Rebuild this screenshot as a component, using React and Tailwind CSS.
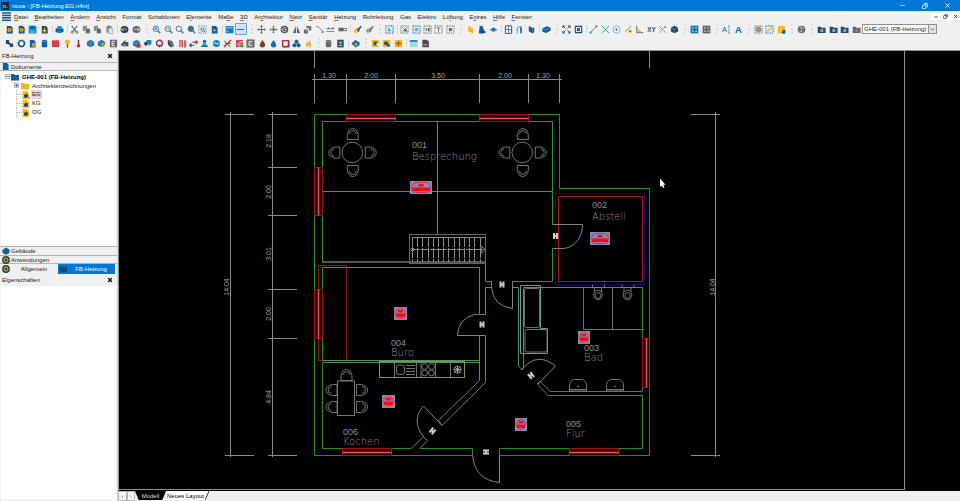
import React from 'react'
import { Minus, X, Copy } from 'lucide-react'

const BLUE = '#0b5fa5'
const NAVY = '#1a4a78'
const SKY = '#2e9bd6'
const GOLD = '#f8b81c'
const GREY = '#666666'
const RED = '#d3203a'

// ---------------------------------------------------------------------
// Small pieces that several toolbar icons share (10 x 10 grid)
// ---------------------------------------------------------------------
const Page = ({ c = NAVY }) => <path d="M2 1h4.5L8.5 3v6.5H2z" fill={c} />
const Cog = ({ x = 5, y = 5, r = 2, c = GOLD, hole = NAVY }) => (
  <>
    <circle cx={x} cy={y} r={r} fill={c} stroke={c} strokeWidth="1" strokeDasharray="1 .7" />
    <circle cx={x} cy={y} r={r * 0.42} fill={hole} />
  </>
)
const Lens = ({ children, fill = 'none' }) => (
  <g fill={fill} stroke="#3b6a94" strokeWidth="1">
    <circle cx="4.2" cy="4.2" r="3" />
    <path d="M6.5 6.5L9.2 9.2" strokeWidth="1.5" />
    {children}
  </g>
)
const Dashed = ({ c = GREY, children }) => (
  <>
    <rect x="1" y="1" width="8" height="8" fill="none" stroke={c} strokeWidth="1" strokeDasharray="1.6 1" />
    {children}
  </>
)
const Cube = ({ c = BLUE }) => (
  <>
    <path d="M5 .8L9 3v4.2L5 9.3 1 7.2V3z" fill={c} />
    <path d="M1 3l4 2 4-2M5 5v4.3" fill="none" stroke="#fff" strokeWidth=".5" opacity=".45" />
  </>
)
const Folder = ({ c = NAVY, dot = GOLD }) => (
  <>
    <path d="M.8 2h3.2l1 1h4.5v6H.8z" fill={c} />
    <circle cx="5.3" cy="6" r="1.8" fill={dot} />
    <circle cx="5.3" cy="6" r=".6" fill={c} />
  </>
)
const Disc = ({ c, arrow, flip }) => (
  <>
    <ellipse cx="5" cy="5" rx="4.4" ry="3.9" fill={c} />
    <path d={flip ? 'M8 3.3v2.5H5.5M7.5 5.5Q5 2.5 2.5 5.5' : 'M2 3.3v2.5h2.5M2.5 5.5Q5 2.5 7.5 5.5'} fill="none" stroke={arrow} strokeWidth="1.1" />
  </>
)
const Drop = ({ c }) => <path d="M5 1C6.5 3.3 8 4.8 8 6.5a3 3 0 0 1-6 0C2 4.8 3.5 3.3 5 1z" fill={c} />
const Barrel = ({ c }) => (
  <>
    <path d="M2 2v6.5c1.5 1 4.5 1 6 0V2z" fill={c} />
    <ellipse cx="5" cy="2" rx="3" ry="1.1" fill={c} stroke="#fff" strokeWidth=".3" />
  </>
)
const Brush = ({ tip, handle }) => (
  <>
    <path d="M5 4.5L8.8.8 9.6 2 6.5 6z" fill={handle} />
    <path d="M3.5 3l4 3.5L6 8z" fill={handle} />
    <path d="M3.2 3.5L6 7.5 3 9.4.8 6.5z" fill={tip} />
  </>
)
const GoldBox = ({ children }) => (
  <>
    <rect x=".8" y="1" width="8.4" height="8" rx="1" fill={GOLD} />
    {children}
  </>
)

const ICONS = {
  new: <><Page /><Cog y={5.5} /></>,
  open: <><Page /><Cog y={5.5} /><path d="M5 7v2.5l2-1.5z" fill={SKY} /></>,
  save: <><path d="M.8.8h7.4l1.2 1.2v7.4H.8z" fill="#1187cf" /><path d="M3 1h4v3H3z" fill="#0a5d97" /><path d="M2.5 6h5v3h-5z" fill="#4fb0e4" /></>,
  export: <><Page /><path d="M5 3v4M3 5.5L5 7.8 7 5.5" stroke={GOLD} strokeWidth="1.3" fill="none" /></>,
  print: <><path d="M.6 3.8h8.8v4.2H.6z" fill={BLUE} /><path d="M2.5 1.5h5V4h-5zM2.5 6.5h5V9h-5z" fill="#1187cf" /></>,
  cut: <><path d="M2 1l4.8 6.3M8 1L3.2 7.3" stroke={GREY} strokeWidth="1.2" /><circle cx="2.4" cy="8" r="1.2" fill="none" stroke={GREY} /><circle cx="7.6" cy="8" r="1.2" fill="none" stroke={GREY} /></>,
  copy: <><path d="M1 1h4.5v5.5H1z" fill="#868686" /><path d="M4 3.5h3.5L9 5v4.5H4z" fill="#666" stroke="#eee" strokeWidth=".4" /></>,
  paste: <><path d="M1.5 1.5h6v7h-6z" fill="#8f8f8f" /><path d="M3 .8h3v1.5H3z" fill="#666" /><path d="M4 3.5h4.5v6H4z" fill="#e8e8e8" stroke="#888" strokeWidth=".6" /></>,
  undo: <Disc c={NAVY} arrow={GOLD} />,
  redo: <Disc c={GREY} arrow="#d6d6d6" flip />,
  zoomIn: <Lens><path d="M2.7 4.2h3M4.2 2.7v3" /></Lens>,
  zoomOut: <Lens><path d="M2.7 4.2h3" /></Lens>,
  zoom: <Lens />,
  zoomAll: <Lens fill="#3b6a94" />,
  zoomWin: <Dashed c="#4f8db8"><circle cx="5" cy="5" r="1.8" fill="none" stroke={BLUE} /><path d="M6.2 6.2L8 8" stroke={BLUE} /></Dashed>,
  zoomPage: <><Page c={BLUE} /><path d="M4 3.5l3.5 3.2H5L4 8z" fill={GOLD} /></>,
  windows: <><path d="M.8 1.2h8.6v8H.8z" fill="#0e7cc4" /><path d="M1.5 3.2h7" stroke="#fff" strokeWidth=".7" /><path d="M1.5 7h3" stroke={GOLD} /></>,
  line: <path d="M1 5h8" stroke="#24557f" strokeWidth="1" />,
  move: <path d="M5 0l1.7 2H5.5v2.5H8V3.3L10 5 8 6.7V5.5H5.5V8h1.2L5 10 3.3 8h1.2V5.5H2v1.2L0 5l2-1.7v1.2h2.5V2H3.3z" fill={GREY} />,
  copyMove: <><path d="M5 .5l1.7 2H3.3zM5 9.5l1.7-2H3.3zM.5 5l2-1.7v3.4zM9.5 5l-2-1.7v3.4z" fill={GREY} /><path d="M3 5h4M5 3v4" stroke={GREY} strokeWidth="1.5" /></>,
  rotate: <><circle cx="5" cy="5" r="4.2" fill="#555" /><path d="M7 4A2.3 2.3 0 1 0 7 6.2M5 5h2.5" fill="none" stroke="#eee" strokeWidth=".9" /></>,
  mirror: <path d="M4.5 1v8H.8zM5.5 1v8h3.7z" fill={GREY} />,
  scale: <><path d="M1 5h4.5v4.5H1zM4 1h5.2v5H6.5V4H4z" fill={GREY} /><path d="M3 7l4.5-4.5" stroke="#ddd" strokeWidth=".8" /></>,
  trim: <><path d="M1 1.5Q6 2 8.5 8" fill="none" stroke={GREY} strokeWidth=".8" /><path d="M6.5 8.5h3v-2z" fill={GREY} /></>,
  array: <><path d="M.5 4.2h9M.5 7.2h9" stroke={GREY} strokeWidth=".8" /><path d="M2.5 2l1.2 2.5H1.3zM7.5 2l1.2 2.5H6.3z" fill={GREY} /></>,
  stretch: <><path d="M.5 3h5.5v4H.5z" fill={GREY} /><path d="M6 3.8h3.5v2.5H6z" fill="none" stroke={GREY} /></>,
  brush: <Brush tip={GOLD} handle={NAVY} />,
  brushGrey: <Brush tip="#999" handle={GREY} />,
  pick: <Dashed c={NAVY}><path d="M3 2.5l4.5 4.2H5.3L4.3 8.5z" fill={SKY} /></Dashed>,
  selHatch: <Dashed><path d="M2.5 2.5l5 5M7.5 2.5l-5 5" stroke={GREY} strokeWidth=".8" /><circle cx="6" cy="6" r="1.5" fill={GREY} /></Dashed>,
  selBlue: <Dashed c={BLUE}><path d="M3 3h4v4H3z" fill="#5db4e6" /></Dashed>,
  selCol: <Dashed><path d="M3 3.5h1.5v3H3zM5.5 3h2v4h-2z" fill={GREY} /></Dashed>,
  selText: <Dashed><path d="M3 3.3h4M5 3.3v4.2" stroke={GREY} strokeWidth="1" /></Dashed>,
  selDot: <Dashed><path d="M3.2 3.2h3.6v3.6H3.2z" fill={GREY} /></Dashed>,
  wall: <path d="M2.5 1L8 3.5v6L2.5 7z" fill={GOLD} />,
  roof: <><path d="M3 1h3l1.5 4v4.5H2z" fill={BLUE} /><path d="M5 5l4.3 2v2H5z" fill={NAVY} /></>,
  floor: <><path d="M.2 5.2L5 3l4.8 2.2L5 7.7z" fill={SKY} /><path d="M3.8 3h2.5v3H3.8z" fill={BLUE} /></>,
  window: <><path d="M1.5 1h7v8.3h-7z" fill="#fff" stroke={NAVY} /><path d="M5 1v8M1.5 5h7" stroke={NAVY} strokeWidth=".8" /></>,
  door: <><path d="M2.5 9.3V3l4-1.5v7.8" fill="none" stroke={SKY} strokeWidth="1.1" /><path d="M6 2l1.5.8v6.5H6z" fill={BLUE} /></>,
  doorBlue: <><path d="M2 1l4 2v6.5L2 7z" fill={BLUE} /><path d="M6 3.5l2-1V8L6 9.5z" fill={NAVY} /></>,
  solid: <><path d="M.3 4l5-2.5L9.7 3v3l-5 3-4.4-1.5z" fill={BLUE} /><path d="M.5 4l4 1.5 5-2.5" fill="none" stroke="#6fb6e0" strokeWidth=".6" /></>,
  snapGrid: <path d="M1 3.3V1h2.3M6.7 1H9v2.3M9 6.7V9H6.7M3.3 9H1V6.7M1 1l3 3M9 1L6 4M9 9L6 6M1 9l3-3" fill="none" stroke={NAVY} strokeWidth="1" />,
  snapBox: <path d="M1.5 1.5h7v7h-7zM4 4h2v2H4z" fill="none" stroke={NAVY} strokeWidth="1.2" />,
  seg: <><path d="M1.5 8.5l7-7" stroke={GREY} strokeWidth=".9" /><path d="M.7 7.5h2v2h-2zM7.3.6h2v2h-2z" fill={GREY} /></>,
  cross: <path d="M1 1l8 8M9 1L1 9" stroke="#3a87ad" strokeWidth="1" />,
  centre: <><circle cx="5" cy="5" r="4" fill="none" stroke="#5aa3cf" strokeWidth=".8" /><circle cx="5" cy="5" r="1.1" fill={BLUE} /></>,
  tangent: <><path d="M1 7.5l7-6" stroke={GREY} strokeWidth=".9" /><circle cx="6.8" cy="7" r="2" fill={GOLD} /><circle cx="6.8" cy="7" r=".8" fill={NAVY} /></>,
  perp: <><path d="M2 1v7.5h7" fill="none" stroke={NAVY} strokeWidth=".9" /><path d="M2.5 3l5 5h-5z" fill={GOLD} /></>,
  xy: <text x="5" y="7.5" textAnchor="middle" fontSize="7" fontWeight="700" fill="#33477c">XY</text>,
  crossThin: <><path d="M1 1l8 8M9 1L1 9" stroke="#4aa5d0" strokeWidth=".9" /><path d="M7 2l2 1" stroke={GREY} /></>,
  cube: <Cube c={NAVY} />,
  gridBlue: <><path d="M.7.7h8.6v8.6H.7z" fill="#0e75ba" /><path d="M2.4 2.4h1.6v1.6H2.4zM6 2.4h1.6v1.6H6zM2.4 6h1.6v1.6H2.4zM6 6h1.6v1.6H6z" fill="#e2f2fb" /></>,
  gridGrey: <><path d="M.7.7h8.6v8.6H.7z" fill={GREY} /><path d="M2.4 2.4h1.6v1.6H2.4zM6 2.4h1.6v1.6H6zM2.4 6h1.6v1.6H2.4zM5.5 6.5h3v.8h-3z" fill="#ddd" /></>,
  textCursor: <><text x="0" y="8" fontSize="8" fill={BLUE}>A</text><path d="M7.8 1v8M6.7 1h2.2M6.7 9h2.2" stroke={SKY} strokeWidth=".8" /></>,
  text: <text x="5" y="8.7" textAnchor="middle" fontSize="10.5" fontWeight="700" fill={BLUE}>A</text>,
  maskGrey: <Dashed><circle cx="5" cy="5" r="2.8" fill="#999" stroke={GREY} strokeWidth=".6" /></Dashed>,
  maskPen: <Dashed c={BLUE}><path d="M2.5 7.5l5-5" stroke={GOLD} strokeWidth="1.6" /></Dashed>,
  note: <><rect x="1" y="1" width="8" height="8.5" rx="1.2" fill={GOLD} /><path d="M5.5 5.5h3.8v4H5.5z" fill={BLUE} /><path d="M4 5l2 2" stroke="#fff" strokeWidth=".8" /></>,
  ball: <><circle cx="5" cy="5" r="4.2" fill={GREY} /><path d="M3 2.5Q6 2 7.5 4M5 4v2.5M3 6Q3.5 8 6 7.5" stroke="#d9d9d9" fill="none" strokeWidth=".9" /></>,
  folder: <Folder />,
  folderGrey: <Folder c={GREY} dot="#8c8c8c" />,

  pipes: <path d="M1 1h3.5v2.5L7 5h2v4H5.5V7L3 5.5H1z" fill={NAVY} />,
  gear: <><circle cx="5" cy="5" r="3.2" fill="#fff" stroke={NAVY} strokeWidth="1.6" /><circle cx="5" cy="5" r="4" fill="none" stroke={BLUE} strokeWidth="1" strokeDasharray="1.5 1.6" /><circle cx="5" cy="5" r="1.2" fill="#f3e2a8" /></>,
  pageGear: <><Page c={BLUE} /><Cog x={6.5} y={6.5} /></>,
  barrel: <Barrel c={BLUE} />,
  radiator: <><path d="M1 1.5h8v7.3H1z" fill="#cf3045" /><path d="M3 2v6M5 2v6M7 2v6" stroke="#df6472" strokeWidth=".5" /></>,
  lamp: <><path d="M2 1.5h6L6.5 6h-3z" fill={GOLD} /><circle cx="5" cy="3.5" r="2.7" fill={GOLD} /><path d="M4.3 6h1.4v3.5H4.3z" fill={NAVY} /></>,
  thermo: <><path d="M4.3 1h1.5v5H4.3z" fill={NAVY} /><circle cx="5" cy="7.5" r="1.9" fill={RED} /><path d="M4.6 4h.9v3h-.9z" fill={RED} /></>,
  cold: <Cube c="#2178b5" />,
  coldGold: <><Cube c="#2178b5" /><Cog x={7} y={7} r={1.6} /></>,
  eBox: <><path d="M1 .8h8v8.4H1z" fill={GREY} /><path d="M6.8 2.5H3.5v5h3.3M3.5 5h2.8" stroke="#eee" fill="none" strokeWidth="1.1" /></>,
  valve: <><path d="M.7 6.5L6 1.2v2.5h3.3V8H3z" fill={NAVY} /><path d="M3 6.5h4" stroke={GOLD} strokeWidth="1.2" /></>,
  coldRed: <><Cube c="#2178b5" /><path d="M5 6h4.5v3.5H5z" fill={RED} /></>,
  cubes: <><path d="M4.5 1h4.8v5.5H5L3 4z" fill="#1680c6" /><path d="M.7 4.5L3 3l2.5 2.5L3 8z" fill={NAVY} /><path d="M5.5 6h3L7.5 9z" fill={GOLD} /></>,
  ring: <><circle cx="5" cy="4.6" r="3.3" fill="#fff" stroke="#c21d62" strokeWidth="1.6" /><path d="M2 6.5h5L5 9.7z" fill={BLUE} /></>,
  slab: <><path d="M2 1l4.5 1.3 2.5 5.5-3.5 1.7L2 6z" fill={NAVY} /><path d="M4 2.5l3.5 5.5" stroke="#e18b28" strokeWidth="1.2" /></>,
  coil: <path d="M2 9V1.5h1.5V9M5 9V1.5M7 1.5V9h1.5V1.5" fill="none" stroke="#b44a56" strokeWidth="1.1" />,
  flow: <><path d="M4 3.5h5.5M7.5 1.5l2 2-2 2" stroke={RED} fill="none" strokeWidth="1.2" /><path d="M6 7H.8M2.8 5l-2 2 2 2" stroke={BLUE} fill="none" strokeWidth="1.2" /></>,
  person: <><circle cx="5" cy="2.8" r="1.9" fill={BLUE} /><path d="M5 3l4.3 6H.7z" fill={SKY} /><path d="M1.5 8h7" stroke={NAVY} /></>,
  wave: <><circle cx="5" cy="5" r="4" fill="#1487c9" /><path d="M1.5 5Q3.5 3 5 5t3.5-1" fill="none" stroke="#fff" strokeWidth="1" /></>,
  chart: <><path d="M1 9l8-8" stroke={RED} strokeWidth="1.5" /><path d="M1.5 2l6.5 6.5" stroke="#51803a" strokeWidth="1.2" /><path d="M6 5h3M2 5.5h2.5" stroke="#a22" /></>,
  exchange: <><path d="M1 1h8v5H5v3H1z" fill="#e0404a" /><path d="M3 7Q4.500 2.500 9 3" stroke="#fff" fill="none" strokeWidth="1.1" /><path d="M5.5 6h3.8v3.2H5.5z" fill="#3ba24c" /></>,
  cBox: <><path d="M1 1h8v8H1z" fill="#777" stroke={GREY} /><path d="M6.8 3H3.5v4h3.3" stroke="#fff" fill="none" strokeWidth="1" /></>,
  oil: <Drop c="#7a4327" />,
  water: <Drop c="#0d6fb4" />,
  frame: <><path d="M1.8 1.8h6.4v6.4H1.8z" fill="#fff" stroke={RED} strokeWidth="1.6" /><path d="M9 2v7H2" stroke={BLUE} strokeWidth="1" fill="none" /></>,
  rolls: <g fill={BLUE} stroke={NAVY} strokeWidth=".5"><circle cx="5" cy="3" r="2" /><circle cx="2.7" cy="7" r="2" /><circle cx="7.3" cy="7" r="2" /></g>,
  flame: <><path d="M5.5.7C6 3 8.5 4.5 8 7.2 7.5 9.8 2.5 9.8 2 7c-.2-2 1-2.7 1.5-4l1 1.5Q5.7 3 5.5.7z" fill="#fba51b" /><path d="M5 5.5C6.5 7 6.2 9 5 9S3.5 7.5 5 5.5z" fill="#fff0a0" /></>,
  tank: <Barrel c={GREY} />,
  contact: <><path d="M1.5.8h7v8.5h-7z" fill={NAVY} /><circle cx="5" cy="3.8" r="1.4" fill={GOLD} /><path d="M2.8 7.7q2.2-3 4.4 0z" fill={GOLD} /></>,
  solidGear: <><path d="M.5 5L5 1.2 9.5 4v3L5 9.5z" fill={BLUE} /><Cog x={5.5} y={6} r={1.6} /></>,
  boxArrow: <GoldBox><path d="M3 3h4v4H3z" fill={NAVY} /><path d="M5 5h3.5v3.5z" fill="#fff" /></GoldBox>,
  boxGear: <GoldBox><path d="M2.5 3h4v3.5h-4z" fill={NAVY} /><circle cx="7" cy="7" r="1.7" fill={BLUE} /></GoldBox>,
  boxPlus: <GoldBox><path d="M5 2v6M2 5h6" stroke="#b3541c" strokeWidth="1.5" /></GoldBox>,
  table: <><path d="M.8 1.2h8.6v8H.8z" fill="#a9d6ee" /><path d="M.8 1.2h8.6v2H.8z" fill="#1a7dbb" /></>,
  csv: <><path d="M1.5.8h5L8.8 3v6.3H1.5z" fill="#4d4d4d" /><path d="M2.5 6.5h5" stroke="#ccc" strokeWidth=".8" /></>,
}

const Icon = ({ name }) => (
  <svg viewBox="0 0 10 10" className="w-[9px] h-[9px] shrink-0 overflow-visible font-['Liberation_Sans',sans-serif]" aria-hidden="true">
    {ICONS[name]}
  </svg>
)

// ---------------------------------------------------------------------
// Menu + toolbars. `|` is a thin divider, `:` the dotted grip of a new bar.
// ---------------------------------------------------------------------
const MENU = [
  ['', 'D', 'atei'], ['', 'B', 'earbeiten'], ['', 'Ä', 'ndern'], ['', 'A', 'nsicht'], ['Format', '', ''],
  ['Schablonen', '', ''], ['E', 'l', 'emente'], ['Ma', 'ß', 'e'], ['', '3', 'D'], ['Ar', 'c', 'hitektur'],
  ['', 'N', 'etz'], ['', 'S', 'anitär'], ['', 'H', 'eizung'], ['Rohrleitung', '', ''], ['Gas', '', ''],
  ['Elektro', '', ''], ['Lü', 'f', 'tung'], ['E', 'x', 'tras'], ['', 'H', 'ilfe'], ['', 'F', 'enster'],
]

const TOOLBAR_MAIN = [
  ['new', 'open', 'save', 'export'], '|', ['print'], '|',
  ['cut', 'copy', 'copy', 'paste'], '|', ['undo', 'redo'], ':',
  ['zoomIn', 'zoomOut', 'zoom', 'zoomAll', 'zoomWin', 'zoomPage'], '|', ['windows', 'line'], ':',
  ['move', 'copyMove', 'rotate', 'mirror', 'scale', 'trim', 'array', 'stretch'], '|', ['brush', 'brushGrey'], ':',
  ['pick'], '|', ['selHatch', 'selBlue', 'selCol', 'selText', 'selDot'], ':',
  ['wall', 'roof', 'floor'], '|', ['window', 'door', 'doorBlue'], '|', ['solid'], ':',
  ['snapGrid', 'snapBox'], '|', ['seg', 'cross', 'centre', 'tangent', 'perp', 'xy', 'crossThin', 'cube'], ':',
  ['gridBlue', 'gridGrey'], ':', ['textCursor', 'text'], ':', ['maskGrey', 'maskPen', 'note'], ':',
  ['ball'], ':', ['folder', 'folder', 'folder', 'folderGrey'],
]

const TOOLBAR_HEATING = [
  ['pipes', 'gear', 'pageGear', 'barrel', 'radiator', 'lamp', 'thermo', 'cold', 'coldGold', 'eBox', 'valve',
    'coldRed', 'cubes', 'ring', 'slab', 'coil', 'flow', 'person', 'wave', 'chart', 'exchange', 'cBox', 'oil',
    'water', 'frame', 'rolls', 'flame'], ':',
  ['tank', 'contact'], '|', ['solidGear'], ':', ['boxArrow', 'boxGear', 'boxPlus'], '|', ['table', 'csv'],
]

const ToolGroup = ({ names }) => (
  <div className="flex shrink-0" style={{ width: Math.floor(names.length * 11.5) }}>
    {names.map((name, i) => (
      <button
        key={i}
        type="button"
        aria-label={name}
        className={`flex-1 min-w-0 h-3 flex items-center justify-center ${
          name === 'line' ? 'bg-[#cde4f5] border border-[#6ea7d3]' : ''
        }`}
      >
        <Icon name={name} />
      </button>
    ))}
  </div>
)

const Toolbar = ({ items, children }) => (
  <div className="h-[14px] shrink-0 flex items-center pl-1" role="toolbar">
    {items.map((item, i) => {
      if (item === '|') return <div key={i} className="w-1 h-2 shrink-0 flex justify-center"><div className="w-px bg-[#d4d4d4]" /></div>
      if (item === ':') return <div key={i} className="w-[9px] h-2.5 shrink-0 flex justify-center"><div className="w-0 border-l-2 border-dotted border-[#dedede]" /></div>
      return <ToolGroup key={i} names={item} />
    })}
    {children}
  </div>
)

// ---------------------------------------------------------------------
// Floor plan symbols
// ---------------------------------------------------------------------
const Chair = ({ x, y, turn = 0 }) => (
  <g transform={`translate(${x} ${y}) rotate(${turn})`}>
    <path d="M-5.5 5.5V.5Q-4 -5.5 0 -5.5T5.5 .5V5.5z" />
    <path d="M-3.5 0Q-3 -3.5 0 -3.5T3.5 0" />
  </g>
)

const RoundTable = ({ x, y }) => (
  <>
    <circle cx={x} cy={y} r="10.3" />
    <Chair x={x + 0.5} y={y - 18.5} />
    <Chair x={x + 0.5} y={y + 18.5} turn={180} />
    <Chair x={x - 18} y={y} turn={-90} />
    <Chair x={x + 18.5} y={y} turn={90} />
  </>
)

const RedWindow = ({ x, y, w, h }) => (
  <>
    <rect x={x} y={y} width={w} height={h} fill="#1c0203" stroke="#a80b10" />
    {w > h
      ? <path d={`M${x} ${y + 4}h${w}`} stroke="#ee5a5c" strokeWidth="1.4" />
      : <path d={`M${x + 4} ${y}v${h}`} stroke="#cf5a60" strokeWidth="1.6" />}
  </>
)

const Manifold = ({ x, y, w }) => {
  const cx = x + w / 2
  return (
    <>
      <rect x={x} y={y} width={w} height="13" fill="#8c86b0" />
      <rect x={x + 1.5} y={y + 1.5} width={w - 3} height="10" rx="5" fill="none" stroke="#e02038" strokeWidth=".8" />
      <rect x={cx - 2.5} y={y + 3} width="5" height="2.5" fill="#f50a1c" />
      <rect x={x + 2} y={y + 6.5} width={w - 4} height="3.5" fill="#f50a1c" />
    </>
  )
}

const DoorMark = ({ x, y, turn = 0 }) => (
  <path transform={`translate(${x} ${y}) rotate(${turn})`} d="M-2.5 -3h2v2h1v-2h2v6h-2v-2h-1v2h-2z" fill="#cfcfcf" stroke="none" />
)

const WashBasin = ({ x }) => (
  <>
    <path d={`M${x} 391v-6q1-5.5 5-5.5h7q4 0 5 5.5v6zM${x} 389.5h17`} />
    <circle cx={x + 8.5} cy="386.5" r=".6" />
  </>
)

const Toilet = ({ x }) => (
  <>
    <ellipse cx={x} cy="295" rx="4.3" ry="4.8" />
    <ellipse cx={x} cy="295.5" rx="2.6" ry="3" />
    <path d={`M${x - 3.5} 292v-4.5h7v4.5M${x - 5.5} 287.5v-3M${x + 6.5} 287.5v-3`} />
  </>
)

const ROOMS = [
  { no: '001', name: 'Besprechung', x: 412, y: 148, gap: 12 },
  { no: '002', name: 'Abstell', x: 592, y: 208, gap: 12 },
  { no: '003', name: 'Bad', x: 584, y: 351, gap: 10 },
  { no: '004', name: 'Büro', x: 391, y: 346, gap: 10 },
  { no: '005', name: 'Flur', x: 566, y: 427, gap: 10 },
  { no: '006', name: 'Kochen', x: 343, y: 435, gap: 10 },
]

const DIMS_TOP = [['1.30', 329], ['2.00', 371], ['3.50', 438], ['2.00', 505], ['1.30', 543]]
const DIMS_SIDE = [['2.18', 271, 141], ['2.00', 271, 192], ['3.01', 271, 254], ['2.00', 271, 314], ['4.84', 271, 397], ['14.04', 229, 287], ['14.04', 715, 287]]
const STEPS = [412.5, 417.5, 422.5, 428.5, 433.5, 438.5, 443.5, 448.5, 454.5, 459.5, 464.5, 469.5, 474.5, 480.5]

const FloorPlan = () => (
  <svg viewBox="118 50 842 441" preserveAspectRatio="xMinYMin meet" className="block w-full h-full" fill="none" strokeWidth="1" role="img" aria-label="EG">
    {/* sheet edge */}
    <path d="M118 50.5H960M904.5 50V489.5M118 489.5H905M118.5 50V491" stroke="#909090" />

    {/* dimension chains */}
    <g stroke="#8a8a8a">
      <path d="M314.5 51V68M649.5 51V68M312 79.5H562" />
      <path d="M314.5 74V103M346.5 74V103M395.5 74V103M479.5 74V103M528.5 74V103M559.5 74V103" />
      <path d="M230.5 112V457M225 114.5H254M225 455.5H254" />
      <path d="M272.5 112V457M268 114.5H297M268 167.5H297M268 215.5H297M268 289.5H297M268 338.5H297M268 455.5H297" />
      <path d="M715.5 112V457M691 114.5H720M691 455.5H720" />
    </g>
    <g fill="#a6a6a6" className="font-['Liberation_Sans',sans-serif] text-[7px]" textAnchor="middle">
      {DIMS_TOP.map(([t, x]) => <text key={x} x={x} y="78">{t}</text>)}
      {DIMS_SIDE.map(([t, x, y]) => <text key={`${x}-${y}`} transform={`translate(${x} ${y}) rotate(-90)`}>{t}</text>)}
    </g>

    {/* underfloor heating zones */}
    <path d="M322.5 191.5H552.5M437.5 121.5V234" stroke="#3d9296" />
    <rect x="318.5" y="265.5" width="28" height="95" stroke="#8f1216" />
    <rect x="555.5" y="193.5" width="89" height="91" stroke="#0a0a78" />
    <rect x="558.5" y="196.5" width="84" height="85" stroke="#ad171b" />

    {/* outer walls */}
    <path d="M472.5 455.5H314.5V114.5H559.5V188.5H649.5V455.5H499.5V448.5H642.5V395.5" stroke="#209020" />
    <path d="M322.5 262V121.5H552.5V224.5M552.5 248.5V281.5H512.5" stroke="#2a9a2e" />
    <path d="M322.5 267.5V360.5M322.5 362.5V448.5H411M420 448.5H472.5V455.5M642.5 287.5V391.5" stroke="#209020" />

    {/* partitions */}
    <g stroke="#588f5a">
      <path d="M322.5 262H485.5" stroke="#5f7f60" strokeWidth="1.5" />
      <path d="M322.5 267.5H479.5V314.5H475M485.5 262V281.5H491.5V287.5H485.5V314.5H479.5" />
      <path d="M485.5 335.5V382.5L442 425.5L438.5 420.5L479.5 380.5V335.5" />
      <path d="M322.5 360.5H479.5M322.5 362.5H479.5" />
      <path d="M411 448.5L423.5 437L427.5 440.5L420 448.5" />
      <path d="M512.5 287.5H518.5V366L522 370L523.5 367V287.5H642.5" />
      <path d="M642.5 391.5H550L540 381L537.5 384L548 395.5H642.5" stroke="#2f9433" />
    </g>
    <path d="M520.5 353V285.5H540.5V328.5H547.5V353.5H520.5" stroke="#5f9fa0" />

    {/* doors */}
    <g stroke="#858585">
      <path d="M552.5 224.5H582.5C582.5 240 572 248.5 562 248.5H552.5" />
      <path d="M491.5 287.5Q493 306 512.5 308.5V281.5" />
      <path d="M475 314.5Q458.5 318 457.5 335.5H485.5" />
      <path d="M424 437C415 427 415 415 423.5 406L442 425.5" />
      <path d="M472.5 455.5Q475 480 499.5 482.5V455" />
      <path d="M522 369.5Q537 351 555.5 366L538 384" />
    </g>
    <DoorMark x={555.5} y={236} />
    <DoorMark x={502} y={284.5} />
    <DoorMark x={482} y={324.5} />
    <DoorMark x={432.5} y={431} turn={40} />
    <DoorMark x={486} y={452} turn={90} />
    <DoorMark x={531} y={375.5} turn={-40} />

    {/* windows */}
    <RedWindow x={346.5} y={114.5} w={49} h={7} />
    <RedWindow x={479.5} y={114.5} w={49} h={7} />
    <RedWindow x={314.5} y={167.5} w={8} h={48} />
    <RedWindow x={314.5} y={289.5} w={8} h={49} />
    <RedWindow x={642.5} y={338.5} w={7} h={49} />
    <RedWindow x={342.5} y={448.5} w={49} h={7} />
    <RedWindow x={569.5} y={448.5} w={49} h={7} />

    {/* stairs */}
    <rect x="409.5" y="234.5" width="76" height="29" stroke="#6f6830" />
    <g stroke="#8d8d8d">
      <path d="M412 237.5H485M481 246L485 249.5L481 253.5zM410.5 249.5l2-2 2 2-2 2z" />
      <path d="M412 249.5H485" strokeDasharray="8 1" />
      {STEPS.map((x) => <path key={x} d={`M${x} 237V262`} strokeDasharray="10 1" />)}
    </g>

    {/* furniture */}
    <g stroke="#808080" strokeWidth=".9">
      <RoundTable x={352.3} y={152.5} />
      <RoundTable x={522.3} y={152.5} />
      <rect x="337.5" y="381" width="17" height="34.5" />
      <Chair x={346.5} y={375} />
      <Chair x={331.5} y={390} turn={-90} />
      <Chair x={331.5} y={407} turn={-90} />
      <Chair x={362} y={390} turn={90} />
      <Chair x={362} y={407} turn={90} />
      <path d="M394.5 362V377M416.5 362V377M421 362V377M435.5 362V377M450.5 362V377" />
      <rect x="396.5" y="365" width="8" height="9.5" rx="2" />
      <path d="M406 365.5h9M406 368.5h9M406 371.5h9M406 374.5h9" />
      {[[424.7, 366.5], [431.6, 366.5], [424.7, 373], [431.6, 373]].map(([x, y]) => <circle key={`${x}${y}`} cx={x} cy={y} r="2.9" />)}
      <circle cx="457.5" cy="369.7" r="3.5" />
      <path d="M453.5 369.7h8M457.5 365.7v8M454.7 366.9l5.6 5.6M460.3 366.9l-5.6 5.6" stroke="#b5b5b5" />
      <rect x="524.5" y="288.5" width="15" height="39" rx="2" />
      <rect x="525" y="329.5" width="22" height="22.5" rx="2" />
      <path d="M583.5 287.5V329.5H642.5M612.5 287.5V329.5" />
      <Toilet x={598} />
      <Toilet x={627.5} />
      <WashBasin x={569.5} />
      <WashBasin x={606.5} />
    </g>
    <rect x="379.5" y="361.5" width="85" height="16" stroke="#8f9238" />

    {ROOMS.map((r) => (
      <g key={r.no} fill="#8c8c8c">
        <text x={r.x} y={r.y} className="font-['Liberation_Sans',sans-serif] text-[9px]">{r.no}</text>
        <text x={r.x} y={r.y + r.gap} className="font-['DejaVu_Sans',sans-serif] font-extralight text-[10px]">{r.name}</text>
      </g>
    ))}

    <Manifold x={410} y={181} w={22} />
    <Manifold x={590} y={232} w={20} />
    <Manifold x={394} y={307} w={13} />
    <Manifold x={382} y={395} w={13} />
    <Manifold x={578} y={331} w={12} />
    <Manifold x={515} y={418} w={12} />

    <path d="M660 178.5V187l1.7-1.5 1.4 2.5 1.4-.7-1.2-2.5h2.2z" fill="#fff" />
  </svg>
)

// ---------------------------------------------------------------------
// Left side panels
// ---------------------------------------------------------------------
const PanelTitle = ({ children }) => (
  <div className="shrink-0 h-3 flex items-center justify-between pl-0.5 pr-1">
    <h2>{children}</h2>
    <button type="button" aria-label="x"><X size={6} strokeWidth={5} color="#111" /></button>
  </div>
)

const FileIcon = ({ marked }) => (
  <svg viewBox="0 0 8 8" className="w-2 h-2 shrink-0 overflow-visible" aria-hidden="true">
    <path d="M.5 0h4.5L7 2v6H.5z" fill={GOLD} />
    <path d="M2 4l2.5-1.5L6 4v2L3.5 7 2 6z" fill={NAVY} />
    {marked && <circle cx="7.2" cy="7" r=".8" fill="#1c8ad0" />}
  </svg>
)

const TreeFolder = ({ c }) => (
  <svg viewBox="0 0 8 8" className="w-2 h-2 shrink-0" aria-hidden="true"><path d="M0 1h3l1 1h4v5.5H0z" fill={c} /></svg>
)

const Toggle = ({ open }) => (
  <button type="button" aria-label={open ? '-' : '+'} className="size-[5px] shrink-0 bg-white border border-[#b5b5b5] flex items-center justify-center">
    <svg viewBox="0 0 3 3" className="size-[3px]"><path d={open ? 'M0 1.5h3' : 'M0 1.5h3M1.5 0v3'} stroke="#555" strokeWidth=".8" /></svg>
  </button>
)

const DrawingsTree = () => (
  <div className="flex-[174_1_0%] min-h-0 overflow-hidden bg-white pt-px pl-1 mx-px">
    <div className="h-[9px] flex items-center font-bold text-black">
      <Toggle open />
      <span className="w-px border-t border-dotted border-[#aaa]" />
      <TreeFolder c={BLUE} />
      <span className="ml-[3px] whitespace-nowrap">GHE-001 (FB-Heizung)</span>
    </div>
    <div className="ml-[9px]">
      <div className="h-[9px] flex items-center">
        <Toggle />
        <span className="w-0.5" />
        <TreeFolder c={GOLD} />
        <span className="ml-[3px]">Architektenzeichnungen</span>
      </div>
      {['EG', 'KG', 'OG'].map((f) => (
        <div key={f} className="h-[9px] flex items-center">
          <span className="ml-0.5 h-full w-1.5 shrink-0 border-l border-dotted border-[#b5b5b5] flex items-center">
            <span className="w-full border-t border-dotted border-[#b5b5b5]" />
          </span>
          <FileIcon marked={f === 'EG'} />
          <a href={`#${f}`} className={`px-px ml-px leading-[9px] ${f === 'EG' ? 'bg-[#d9d9d9]' : ''}`}>{f}</a>
        </div>
      ))}
    </div>
  </div>
)

const GoldCog = () => (
  <svg viewBox="0 0 8 8" className="w-2 h-2 shrink-0" aria-hidden="true">
    <circle cx="4" cy="4" r="3.9" fill="#233f55" />
    <circle cx="4" cy="4" r="2" fill="none" stroke={GOLD} strokeWidth="1" />
  </svg>
)

const Sidebar = () => (
  <aside className="w-[118px] shrink-0 flex flex-col bg-[#f0f0f0] pb-0.5 border-r border-[#d4d4d4]">
    <PanelTitle>FB-Heizung</PanelTitle>
    <button type="button" className="h-[9px] shrink-0 flex items-center gap-px pl-0.5 border-y border-[#b5b5b5]">
      <svg viewBox="0 0 8 8" className="w-2 h-[7px]" aria-hidden="true"><path d="M.5 0H5l2 2v6H.5z" fill={BLUE} /></svg>
      Dokumente
    </button>
    <DrawingsTree />
    <button type="button" className="h-[9px] shrink-0 flex items-center gap-px pl-0.5 border-t border-[#b5b5b5]">
      <svg viewBox="0 0 8 8" className="w-2 h-2" aria-hidden="true"><path d="M.5 3L4 .5l3.5 2V6L4 7.8.5 6z" fill={BLUE} /></svg>
      Gebäude
    </button>
    <button type="button" className="h-[9px] shrink-0 flex items-center gap-px pl-0.5 border-y border-[#b5b5b5]">
      <GoldCog />
      Anwendungen
    </button>
    <div className="h-2.5 shrink-0 flex pr-0.5">
      <button type="button" className="flex-1 flex items-center pl-0.5">
        <GoldCog />
        <span className="flex-1">Allgemein</span>
      </button>
      <button type="button" className="flex-1 flex items-center pl-px bg-[#0078d7] text-white">
        <TreeFolder c={NAVY} />
        <span className="flex-1">FB-Heizung</span>
      </button>
    </div>
    <PanelTitle>Eigenschaften</PanelTitle>
    <div className="flex-[213_1_0%] min-h-0 bg-white mx-px" />
  </aside>
)

const LayoutTabs = () => (
  <div className="h-2.5 shrink-0 flex items-stretch bg-[#f0f0f0] text-black">
    <button type="button" aria-label="<" className="w-[9px] border border-[#b8b8b8] bg-[#f4f4f4] flex items-center justify-center text-[#888] leading-none">‹</button>
    <button type="button" aria-label=">" className="w-2 border border-[#b8b8b8] bg-[#f4f4f4] flex items-center justify-center text-[#888] leading-none">›</button>
    <button type="button" className="w-[31px] mb-px bg-black text-[#ddd] [clip-path:polygon(0_0,100%_0,88%_100%,12%_100%)]">Modell</button>
    <button type="button" className="mb-px pl-px pr-1 bg-white whitespace-nowrap [clip-path:polygon(0_0,100%_0,92%_100%,0_100%)]">Neues Layout</button>
    <svg viewBox="0 0 5 9" className="w-[5px] h-[9px] -ml-1" aria-hidden="true"><path d="M5 0L1 9" stroke="#222" strokeWidth="1" /></svg>
  </div>
)

const App = () => (
  <div className="h-screen flex flex-col overflow-hidden bg-[#f0f0f0] text-[#222] text-[6px] leading-[8px] font-['Liberation_Sans',Arial,sans-serif]">
    <header className="h-[11px] shrink-0 flex items-center bg-[#0078d7] text-white pl-px pr-[9px]">
      <span className="size-2 bg-[#152a45] flex items-center justify-center font-bold text-[#f8b81c]">n.</span>
      <h1 className="ml-[3px] flex-1">nova - [FB-Heizung:EG.n4m]</h1>
      <div className="flex gap-4">
        <button type="button" aria-label="_"><Minus size={7} strokeWidth={2} /></button>
        <button type="button" aria-label="[]"><Copy size={6} strokeWidth={3} className="-scale-x-100" /></button>
        <button type="button" aria-label="x"><X size={7} strokeWidth={3} /></button>
      </div>
    </header>

    <nav className="h-[11px] shrink-0 flex items-center justify-between pl-0.5">
      <div className="flex items-center gap-[3px]">
        <svg viewBox="0 0 9 9" className="size-[9px] shrink-0" aria-hidden="true">
          <path d="M0 1h9M0 3.4h9M0 5.8h9M0 8.2h9" stroke="#135a92" strokeWidth="1.5" />
        </svg>
        <div className="flex justify-between w-[518px]">
          {MENU.map(([pre, key, post], i) => (
            <button key={i} type="button" className="whitespace-nowrap">
              {pre}{key && <span className="underline decoration-[#777]">{key}</span>}{post}
            </button>
          ))}
        </div>
      </div>
      <div className="flex gap-px">
        <button type="button" aria-label="_" className="w-[9px] h-[7px] bg-white flex items-center justify-center"><Minus size={4} strokeWidth={5} /></button>
        <button type="button" aria-label="[]" className="w-[9px] h-[7px] bg-white flex items-center justify-center"><Copy size={5} strokeWidth={3} className="-scale-x-100" /></button>
        <button type="button" aria-label="x" className="w-[9px] h-[7px] bg-white flex items-center justify-center"><X size={5} strokeWidth={4} /></button>
      </div>
    </nav>

    <Toolbar items={TOOLBAR_MAIN}>
      <label className="relative flex items-center">
        <select aria-label="GHE" className="appearance-none w-[75px] h-2.5 pl-px bg-white border border-[#8f8f8f] text-[#222] leading-none" defaultValue="GHE-001 (FB-Heizung)">
          <option>GHE-001 (FB-Heizung)</option>
        </select>
        <span className="absolute right-0 inset-y-0 w-[9px] border border-[#8f8f8f] bg-[#e6e6e6] flex items-center justify-center pointer-events-none">
          <svg viewBox="0 0 6 4" className="w-[5px] h-[3px]"><path d="M.5.5L3 3.2 5.5.5" fill="none" stroke="#444" /></svg>
        </span>
      </label>
    </Toolbar>
    <Toolbar items={TOOLBAR_HEATING} />

    <div className="flex-1 min-h-0 flex">
      <Sidebar />
      <main className="flex-1 min-w-0 flex flex-col">
        <div className="flex-1 min-h-0 bg-black">
          <FloorPlan />
        </div>
        <LayoutTabs />
      </main>
    </div>
  </div>
)

export default App
